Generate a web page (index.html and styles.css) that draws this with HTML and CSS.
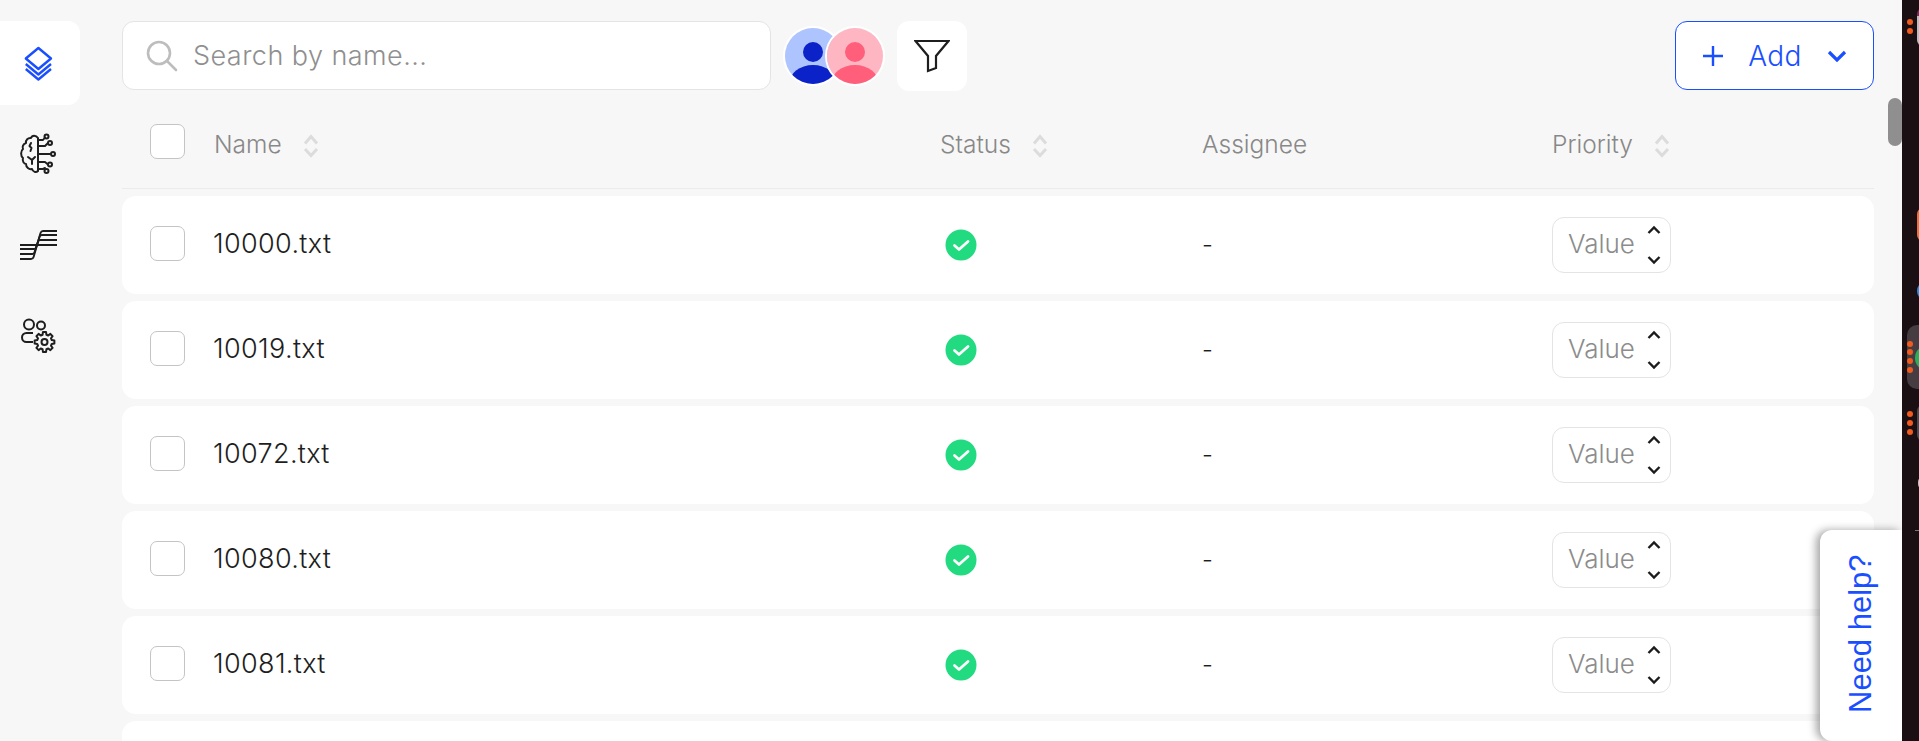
FILE: index.html
```html
<!DOCTYPE html>
<html lang="en">

<head>
    <meta charset="UTF-8">
    <title>Documents</title>
    <link rel="stylesheet" href="styles.css">
</head>

<body>
    <svg class="sprites" width="0" height="0">
        <symbol id="sort" viewBox="0 0 16 24">
            <path class="sort-up" d="M2 9.500 8 2.500l6 7" />
            <path class="sort-down" d="M2 15l6 6.500 6-6.500" />
        </symbol>
        <symbol id="check" viewBox="0 0 32 32">
            <circle cx="16" cy="16" r="15.5" fill="#22da7f" />
            <path d="M9.5 16.5l4.5 4 9-8" fill="none" stroke="#fff" stroke-width="2.8" stroke-linecap="round" stroke-linejoin="round" />
        </symbol>
        <symbol id="stepper" viewBox="0 0 16 42">
            <path d="M2.500 9 8 3.500 13.500 9M2.500 33 8 38.500 13.500 33" fill="none" stroke="#1c1c1c" stroke-width="2.4" />
        </symbol>
    </svg>

    <div class="app">
        <nav class="sidebar">
            <a class="nav-item active">
                <svg width="44" height="44" viewBox="0 0 44 44" fill="none" stroke="#1a4fff" stroke-width="2.4" stroke-linejoin="round">
                    <path d="M20.400 7 33 17.500 20.400 28 7.800 17.500z" />
                    <path d="M7.800 23 20.400 33.500 33 23" />
                    <path d="M7.800 28 20.400 38.500 33 28" />
                </svg>
            </a>
            <a class="nav-item">
                <svg width="44" height="44" viewBox="0 0 44 44" fill="none" stroke="#1e1e1e" stroke-width="2" stroke-linecap="round" stroke-linejoin="round">
                    <path d="M20 6C18 3 14 3 13 6 10 5.500 7.500 8 8 11 5 12 4 15 5 17 2.500 19 2.500 24 5 26 4 29 6 32 8 32 8 35 11 38 14 37 15 40 18 41 20 39V6z" />
                    <path d="M20 8h5l2-2.500M20 14h7l3-3M20 22h12M20 30h7l3 2.500M20 37h5l2-1" />
                    <circle cx="28.500" cy="4.500" r="2" />
                    <circle cx="32" cy="11" r="2" />
                    <circle cx="35" cy="22" r="2" />
                    <circle cx="32" cy="32.500" r="2" />
                    <circle cx="28.500" cy="39" r="2" />
                    <path d="M13 11l-1.500 3 2 2-1 3M10 25l4 3 3-3M14 28v4" />
                </svg>
            </a>
            <a class="nav-item">
                <svg width="44" height="44" viewBox="0 0 44 44" fill="none" stroke="#1e1e1e" stroke-width="1.9">
                    <path d="M2 36H13Q15 36 15.600 34L22.500 10Q23.200 8 25 8H39" />
                    <path d="M2 31H14.500Q16 31 16.600 29L21.500 14Q22 12 24 12H39" />
                    <path d="M2 26H16Q17.500 26 18 24.500L20 19Q20.500 17 22 17H39" />
                    <path d="M2 22H39" />
                </svg>
            </a>
            <a class="nav-item">
                <svg width="44" height="44" viewBox="0 0 44 44" fill="none" stroke="#1e1e1e" stroke-width="2" stroke-linejoin="round">
                    <circle cx="11" cy="10.500" r="5" />
                    <circle cx="23" cy="11.500" r="4" />
                    <path d="M15 19H8.500a4.500 4.500 0 0 0 0 9H15" />
                    <path transform="translate(26.500 28)" d="M7.240-1.940 9.880-1.560V1.560L7.240 1.940 6.500 3.750 8.090 5.880 5.880 8.090 3.750 6.500 1.940 7.240 1.560 9.880H-1.560L-1.940 7.240-3.750 6.500-5.880 8.090-8.090 5.880-6.500 3.750-7.240 1.940-9.880 1.560V-1.560L-7.240-1.940-6.500-3.750-8.090-5.880-5.880-8.090-3.750-6.500-1.940-7.240-1.560-9.880H1.560L1.940-7.240 3.750-6.500 5.880-8.090 8.090-5.880 6.500-3.750z" />
                    <circle cx="26.500" cy="28" r="3" />
                </svg>
            </a>
        </nav>

        <main class="content">
            <div class="toolbar">
                <label class="search">
                    <svg width="34" height="34" viewBox="0 0 34 34" fill="none" stroke="#bdbdbd" stroke-width="2.6">
                        <circle cx="14" cy="14" r="11" />
                        <path d="M22 22l9 9" stroke-linecap="round" />
                    </svg>
                    <span class="placeholder">Search by name...</span>
                </label>
                <div class="avatars">
                    <div class="avatar">
                        <svg width="56" height="56" viewBox="0 0 56 56">
                            <rect width="56" height="56" fill="#aec4ff" />
                            <circle cx="28" cy="24" r="10" fill="#0a22c8" />
                            <ellipse cx="28" cy="56" rx="24" ry="19" fill="#0a22c8" />
                        </svg>
                    </div>
                    <div class="avatar">
                        <svg width="56" height="56" viewBox="0 0 56 56">
                            <rect width="56" height="56" fill="#ffb6c3" />
                            <circle cx="28" cy="24" r="10" fill="#ff5f7a" />
                            <ellipse cx="28" cy="56" rx="24" ry="19" fill="#ff5f7a" />
                        </svg>
                    </div>
                </div>
                <button class="filter-btn">
                    <svg width="36" height="36" viewBox="0 0 36 36" fill="none" stroke="#1e1e1e" stroke-width="2.2" stroke-linejoin="miter">
                        <path d="M1.500 3H34.500L22 18V30L14 33V18z" />
                    </svg>
                </button>
                <button class="add-btn">
                    <svg width="20" height="20" viewBox="0 0 20 20" stroke="#1a4fff" stroke-width="2.4">
                        <path d="M0 10H20M10 0V20" />
                    </svg>
                    <span>Add</span>
                    <svg width="20" height="12" viewBox="0 0 20 12" fill="none" stroke="#1a4fff" stroke-width="3.2">
                        <path d="M2 2l8 8 8-8" />
                    </svg>
                </button>
            </div>

            <div class="table-head">
                <span class="checkbox"></span>
                <div class="col-title">Name <svg class="sort-icon sort-active" width="16" height="24"><use href="#sort" /></svg></div>
                <div class="col-title">Status <svg class="sort-icon" width="16" height="24"><use href="#sort" /></svg></div>
                <div class="col-title">Assignee</div>
                <div class="col-title">Priority <svg class="sort-icon" width="16" height="24"><use href="#sort" /></svg></div>
            </div>

            <div class="rows">
                <div class="row">
                    <span class="checkbox"></span>
                    <div class="file-name">10000.txt</div>
                    <div class="status"><svg width="32" height="32"><use href="#check" /></svg></div>
                    <div class="assignee">-</div>
                    <div class="value-box"><span>Value</span><svg width="16" height="42"><use href="#stepper" /></svg></div>
                </div>
                <div class="row">
                    <span class="checkbox"></span>
                    <div class="file-name">10019.txt</div>
                    <div class="status"><svg width="32" height="32"><use href="#check" /></svg></div>
                    <div class="assignee">-</div>
                    <div class="value-box"><span>Value</span><svg width="16" height="42"><use href="#stepper" /></svg></div>
                </div>
                <div class="row">
                    <span class="checkbox"></span>
                    <div class="file-name">10072.txt</div>
                    <div class="status"><svg width="32" height="32"><use href="#check" /></svg></div>
                    <div class="assignee">-</div>
                    <div class="value-box"><span>Value</span><svg width="16" height="42"><use href="#stepper" /></svg></div>
                </div>
                <div class="row">
                    <span class="checkbox"></span>
                    <div class="file-name">10080.txt</div>
                    <div class="status"><svg width="32" height="32"><use href="#check" /></svg></div>
                    <div class="assignee">-</div>
                    <div class="value-box"><span>Value</span><svg width="16" height="42"><use href="#stepper" /></svg></div>
                </div>
                <div class="row">
                    <span class="checkbox"></span>
                    <div class="file-name">10081.txt</div>
                    <div class="status"><svg width="32" height="32"><use href="#check" /></svg></div>
                    <div class="assignee">-</div>
                    <div class="value-box"><span>Value</span><svg width="16" height="42"><use href="#stepper" /></svg></div>
                </div>
                <div class="row"></div>
            </div>
        </main>

        <div class="scroll-thumb"></div>
        <a class="help-tab">Need help?</a>
    </div>

    <!-- desktop dock peeking in on the right -->
    <aside class="dock">
        <span class="dock-app dock-top"></span>
        <span class="dock-app dock-orange"></span>
        <span class="dock-app dock-blue"></span>
        <span class="dock-tile"></span>
        <span class="dock-app dock-green"></span>
        <span class="dock-app dock-grey"></span>
        <span class="dock-app dock-small"></span>
        <span class="dock-line"></span>
        <span class="dot dot-1"></span>
        <span class="dot dot-2"></span>
        <span class="dot dot-3"></span>
        <span class="dot dot-4"></span>
        <span class="dot dot-5"></span>
        <span class="dot dot-6"></span>
        <span class="dot dot-7"></span>
        <span class="dot dot-8"></span>
        <span class="dot dot-9"></span>
    </aside>
</body>

</html>
```

FILE: styles.css
```css
* {
    box-sizing: border-box;
}

html,
body {
    margin: 0;
    height: 741px;
    overflow: hidden;
}

body {
    display: flex;
    font-family: Inter, "Liberation Sans", sans-serif;
    background-color: #1a1013;
}

.sprites {
    position: absolute;
}

.app {
    position: relative;
    display: flex;
    width: 1902px;
    height: 741px;
    flex-shrink: 0;
    overflow: hidden;
    background-color: #f7f7f7;
}

/* sidebar */
.sidebar {
    width: 122px;
    flex-shrink: 0;
    padding-top: 21px;
    display: flex;
    flex-direction: column;
    gap: 7px;
}

.nav-item {
    width: 80px;
    height: 84px;
    display: flex;
    align-items: center;
    justify-content: center;
    border-radius: 0 12px 12px 0;
}

.nav-item.active {
    background-color: #fff;
}

/* toolbar */
.content {
    width: 1752px;
    flex-shrink: 0;
    padding-top: 21px;
}

.toolbar {
    display: flex;
    align-items: flex-start;
    gap: 12px;
    height: 70px;
}

.search {
    width: 649px;
    height: 69px;
    display: flex;
    align-items: center;
    gap: 14px;
    padding-left: 22px;
    background-color: #fff;
    border: 1px solid #e4e4e4;
    border-radius: 12px;
}

.placeholder {
    font-size: 27px;
    font-weight: 300;
    letter-spacing: .45px;
    color: #8f8f8f;
}

.avatars {
    display: flex;
    margin-top: 5px;
}

.avatar {
    width: 60px;
    height: 60px;
    border: 2px solid #fff;
    border-radius: 50%;
    overflow: hidden;
}

.avatar svg {
    display: block;
}

.avatar+.avatar {
    margin-left: -18px;
}

.filter-btn {
    width: 70px;
    height: 70px;
    display: flex;
    align-items: center;
    justify-content: center;
    padding: 0;
    border: none;
    border-radius: 12px;
    background-color: #fff;
}

.add-btn {
    margin-left: auto;
    width: 199px;
    height: 69px;
    display: flex;
    align-items: center;
    padding: 0 26px 0 27px;
    justify-content: space-between;
    font-family: inherit;
    font-size: 28px;
    font-weight: 300;
    letter-spacing: .3px;
    color: #1a4fff;
    background-color: #fff;
    border: 1.5px solid #1a4fff;
    border-radius: 12px;
}

/* table */
.table-head,
.row {
    display: grid;
    grid-template-columns: 64px 726px 262px 350px 1fr;
    align-items: center;
    padding-left: 28px;
}

.table-head {
    height: 98px;
    border-bottom: 1px solid #ebebeb;
}

.table-head .checkbox {
    margin-top: 4px;
}

.col-title {
    display: flex;
    align-items: center;
    gap: 21px;
    padding-top: 8px;
    font-size: 24.5px;
    font-weight: 300;
    color: #888;
}

.sort-icon {
    fill: none;
    stroke-width: 3;
    stroke: #dcdcdc;
    margin-top: 4px;
}

.sort-active .sort-up {
    stroke: #a6a6a6;
}

.checkbox {
    width: 35px;
    height: 35px;
    background-color: #fff;
    border: 1px solid #c4c4c4;
    border-radius: 7px;
}

.rows {
    display: flex;
    flex-direction: column;
    gap: 7px;
    padding-top: 7px;
}

.row {
    height: 98px;
    flex-shrink: 0;
    background-color: #fff;
    border-radius: 14px;
}

.row .checkbox {
    margin-top: -3px;
}

.file-name {
    margin: -3px 0 0 -1px;
    font-size: 27px;
    font-weight: 300;
    letter-spacing: .35px;
    color: #1e1e1e;
}

.status {
    padding-left: 5px;
    display: flex;
}

.assignee {
    margin-top: -2px;
    font-size: 24px;
    font-weight: 300;
    color: #1e1e1e;
}

.value-box {
    width: 119px;
    height: 56px;
    margin-top: -1px;
    display: flex;
    align-items: center;
    justify-content: space-between;
    padding: 0 8px 0 15px;
    font-size: 26px;
    font-weight: 300;
    color: #8c8c8c;
    border: 1px solid #e4e4e4;
    border-radius: 12px;
}

.value-box span {
    margin-top: -3px;
}

.scroll-thumb {
    position: absolute;
    top: 98px;
    right: 0;
    width: 14px;
    height: 48px;
    background-color: #8f8f8f;
    border-radius: 7px;
}

.help-tab {
    position: absolute;
    top: 530px;
    right: 0;
    width: 82px;
    height: 211px;
    display: flex;
    align-items: center;
    justify-content: flex-start;
    writing-mode: vertical-rl;
    transform: rotate(180deg);
    padding-top: 28px;
    font-family: "Liberation Sans", Arial, sans-serif;
    font-size: 31px;
    color: #1a4fff;
    background-color: #fff;
    border-radius: 0 12px 12px 0;
    box-shadow: 4px 0 9px rgba(0, 0, 0, .35);
}

/* dock */
.dock {
    position: relative;
    flex: 1;
    height: 741px;
    overflow: hidden;
}

.dock-app,
.dock-tile,
.dock-line,
.dot {
    position: absolute;
}

.dot {
    left: 5px;
    width: 6px;
    height: 6px;
    border-radius: 50%;
    background-color: #f05a1e;
}

.dot-1 { top: 19px; }
.dot-2 { top: 28px; }
.dot-3 { top: 341px; }
.dot-4 { top: 349px; }
.dot-5 { top: 358px; }
.dot-6 { top: 367px; }
.dot-7 { top: 411px; }
.dot-8 { top: 420px; }
.dot-9 { top: 429px; }

.dock-app {
    left: 15px;
    width: 30px;
    border-radius: 6px;
}

.dock-top {
    top: 8px;
    height: 38px;
    background: linear-gradient(#7b2a5a 20%, #bdbdbd 20%);
}

.dock-orange {
    top: 208px;
    height: 33px;
    background-color: #f0703a;
}

.dock-blue {
    top: 281px;
    height: 20px;
    background-color: #2a8fe0;
    border-radius: 10px;
}

.dock-tile {
    top: 325px;
    left: 5px;
    width: 30px;
    height: 64px;
    background-color: #453d42;
    border-radius: 10px;
}

.dock-green {
    top: 345px;
    left: 13px;
    height: 26px;
    background-color: #2fae5a;
    border-radius: 13px;
}

.dock-grey {
    top: 405px;
    height: 36px;
    background-color: #4a4a4a;
}

.dock-small {
    top: 476px;
    left: 16px;
    height: 14px;
    background-color: #bdbdbd;
}

.dock-line {
    top: 530px;
    left: 13px;
    width: 10px;
    height: 1px;
    background-color: #777;
}
```
